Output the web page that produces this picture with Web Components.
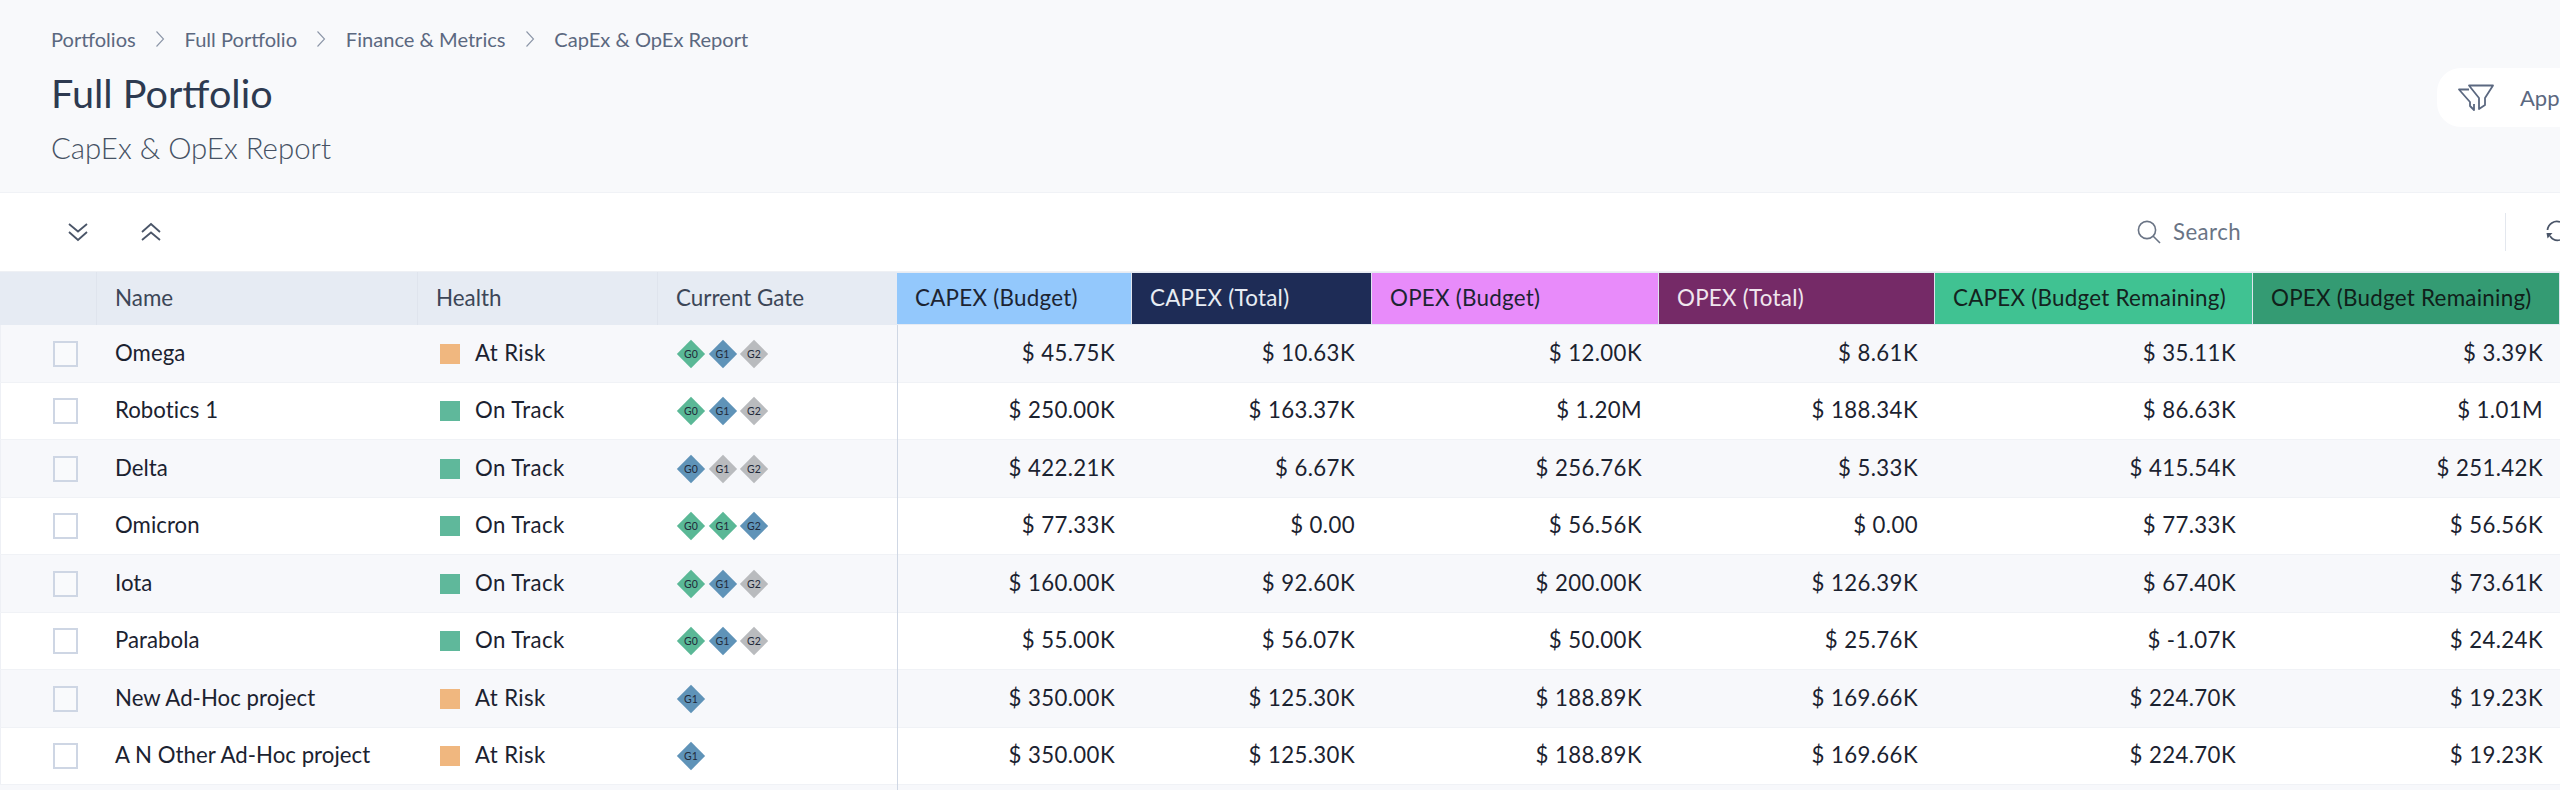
<!doctype html>
<html>
<head>
<meta charset="utf-8">
<style>
  html, body { margin: 0; padding: 0; background: #fff; }
  body { width: 2560px; height: 790px; overflow: hidden; font-family: "Lato", "Liberation Sans", sans-serif; }
</style>
</head>
<body>
<report-page></report-page>
<script>
/* ---------- data ---------- */
const COLUMNS = [
  { label: "CAPEX (Budget)", bg: "#93c8fc", fg: "#1c2433" },
  { label: "CAPEX (Total)", bg: "#1e2c56", fg: "#e8ecf3" },
  { label: "OPEX (Budget)", bg: "#e88bfa", fg: "#1c2433" },
  { label: "OPEX (Total)", bg: "#752a67", fg: "#f0e6ee" },
  { label: "CAPEX (Budget Remaining)", bg: "#40c292", fg: "#14231f" },
  { label: "OPEX (Budget Remaining)", bg: "#349b73", fg: "#10201a" },
];

const ROWS = [
  ["Omega", "At Risk", "gbs", ["45.75K", "10.63K", "12.00K", "8.61K", "35.11K", "3.39K"]],
  ["Robotics 1", "On Track", "gbs", ["250.00K", "163.37K", "1.20M", "188.34K", "86.63K", "1.01M"]],
  ["Delta", "On Track", "bss", ["422.21K", "6.67K", "256.76K", "5.33K", "415.54K", "251.42K"]],
  ["Omicron", "On Track", "ggb", ["77.33K", "0.00", "56.56K", "0.00", "77.33K", "56.56K"]],
  ["Iota", "On Track", "gbs", ["160.00K", "92.60K", "200.00K", "126.39K", "67.40K", "73.61K"]],
  ["Parabola", "On Track", "gbs", ["55.00K", "56.07K", "50.00K", "25.76K", "-1.07K", "24.24K"]],
  ["New Ad-Hoc project", "At Risk", "B", ["350.00K", "125.30K", "188.89K", "169.66K", "224.70K", "19.23K"]],
  ["A N Other Ad-Hoc project", "At Risk", "B", ["350.00K", "125.30K", "188.89K", "169.66K", "224.70K", "19.23K"]],
];

const GRID = "96px 321px 240px 240px 235px 240px 287px 276px 318px 307px";

/* ---------- <bread-crumbs> ---------- */
class BreadCrumbs extends HTMLElement {
  connectedCallback() {
    this.attachShadow({ mode: "open" });
    const items = this.getAttribute("items").split("|");
    const chev = `<svg width="10" height="18" viewBox="0 0 10 18" fill="none" stroke="#8b95a7" stroke-width="1.1"><path d="M1.5 1.5 L8.5 9 L1.5 16.5"/></svg>`;
    this.shadowRoot.innerHTML = `
      <style>
        :host { display: flex; align-items: center; gap: 19.4px; height: 24px; font-size: 20.1px; color: #5b6880; white-space: nowrap; }
        svg { display: block; }
      </style>
      ${items.map((t) => `<span>${t}</span>`).join(chev)}
    `;
  }
}
customElements.define("bread-crumbs", BreadCrumbs);

/* ---------- <page-header> ---------- */
class PageHeader extends HTMLElement {
  connectedCallback() {
    this.attachShadow({ mode: "open" });
    this.shadowRoot.innerHTML = `
      <style>
        :host { display: block; height: 192px; background: #f8f9fb; border-bottom: 1px solid #f0f2f6; overflow: hidden; }
        .inner { display: flex; justify-content: space-between; box-sizing: border-box; padding: 27px 0 0 51px; }
        h1 { margin: 20px 0 0; font-size: 39.6px; line-height: 44px; font-weight: 400; color: #2d3a50; }
        h2 { margin: 15px 0 0; font-size: 29.4px; line-height: 36px; font-weight: 300; color: #465264; }
        .btn {
          display: flex; align-items: center; gap: 26px; align-self: flex-start;
          margin-top: 41px; width: 123px; height: 59px; box-sizing: border-box; padding-left: 21px;
          background: #fff; border-radius: 24px 0 0 24px; font-size: 22px; color: #5b6880; white-space: nowrap;
        }
        svg { display: block; flex: none; }
      </style>
      <div class="inner">
        <div>
          <bread-crumbs items="Portfolios|Full Portfolio|Finance &amp; Metrics|CapEx &amp; OpEx Report"></bread-crumbs>
          <h1>${this.getAttribute("heading")}</h1>
          <h2>${this.getAttribute("sub")}</h2>
        </div>
        <div class="btn">
          <svg width="36" height="28" viewBox="0 0 36 28" fill="none" stroke="#5b6880" stroke-width="1.8" stroke-linejoin="round">
            <path d="M11 1.5 H35 L27 14 V21 L21 25 V14 Z"/>
            <path d="M11 5.5 H1 L12 18 V22 L16 26 V20"/>
          </svg>
          <span>App</span>
        </div>
      </div>
    `;
  }
}
customElements.define("page-header", PageHeader);

/* ---------- <tool-bar> ---------- */
class ToolBar extends HTMLElement {
  connectedCallback() {
    this.attachShadow({ mode: "open" });
    this.shadowRoot.innerHTML = `
      <style>
        :host { display: block; height: 78px; background: #fff; overflow: hidden; }
        .inner { display: flex; align-items: center; height: 78px; padding-left: 68px; box-sizing: border-box; }
        svg { display: block; flex: none; }
        .up { margin-left: 53px; }
        .search { display: flex; align-items: center; gap: 12px; margin-left: 1976px; font-size: 22.2px; letter-spacing: .45px; color: #6a7485; width: 368px; }
        .search span { padding-bottom: 2px; }
        .sep { width: 1px; height: 38px; background: #e3e7ee; flex: none; }
        .refresh { margin-left: 40px; margin-top: -2px; }
      </style>
      <div class="inner">
        <svg width="20" height="20" viewBox="0 0 20 20" fill="none" stroke="#4a5568" stroke-width="1.8"><path d="M1 2 L10 9.5 L19 2 M1 10 L10 18 L19 10"/></svg>
        <svg class="up" width="20" height="20" viewBox="0 0 20 20" fill="none" stroke="#4a5568" stroke-width="1.8"><path d="M1 10 L10 2 L19 10 M1 18 L10 10.5 L19 18"/></svg>
        <div class="search">
          <svg width="24" height="24" viewBox="0 0 24 24" fill="none" stroke="#6a7485" stroke-width="1.6"><circle cx="10" cy="10" r="8.6"/><path d="M16 16 L23 23"/></svg>
          <span>Search</span>
        </div>
        <div class="sep"></div>
        <svg class="refresh" width="14" height="22" viewBox="0 0 14 22" fill="none" stroke="#4a5568" stroke-width="1.7"><path d="M1.5 10 A9.5 9.5 0 0 1 14 2 M4 16 A9.5 9.5 0 0 0 14 20"/><path d="M0.5 13 L6.5 13 L1.5 18.5 Z" fill="#4a5568" stroke="none"/></svg>
      </div>
    `;
  }
}
customElements.define("tool-bar", ToolBar);

/* ---------- <gate-diamond> ---------- */
const GATE_COLORS = { g: "#5ab896", b: "#5f93b8", s: "#b9bbbe" };
class GateDiamond extends HTMLElement {
  connectedCallback() {
    this.attachShadow({ mode: "open" });
    const c = GATE_COLORS[this.getAttribute("tone")];
    this.shadowRoot.innerHTML = `
      <style>
        :host { display: block; position: relative; width: 28px; height: 28px; font-size: 10.5px; color: #1f2a3a; }
        .d { width: 20px; height: 20px; margin: 4px; background: ${c}; transform: rotate(45deg); }
        span { position: absolute; inset: 0; display: flex; align-items: center; justify-content: center; }
      </style>
      <div class="d"></div><span><slot></slot></span>
    `;
  }
}
customElements.define("gate-diamond", GateDiamond);

/* ---------- <project-row> ---------- */
class ProjectRow extends HTMLElement {
  connectedCallback() {
    this.attachShadow({ mode: "open" });
    const d = this.data;
    const odd = this.hasAttribute("striped");
    const chip = d[1] === "At Risk" ? "#f0b77f" : "#5fb89b";
    const gates = d[2] === "B"
      ? `<gate-diamond tone="b">G1</gate-diamond>`
      : [...d[2]].map((t, i) => `<gate-diamond tone="${t}">G${i}</gate-diamond>`).join("");
    this.shadowRoot.innerHTML = `
      <style>
        :host { display: grid; grid-template-columns: ${GRID}; height: 57.5px; align-items: center;
                background: ${odd ? "#f7f8fb" : "#fff"}; font-size: 22.2px; color: #1b2230;
                box-shadow: inset 0 -1px 0 #f0f2f6, inset 1px 0 0 #eef0f5; }
        .box { width: 25px; height: 26px; margin-left: 53px; box-sizing: border-box; border: 2px solid #ced6e4; background: ${odd ? "#f9fafc" : "#fff"}; }
        .name { padding: 0 0 3px 19px; white-space: nowrap; letter-spacing: .05px; }
        .health { display: flex; align-items: center; padding-left: 23px; gap: 15px; }
        .health span { padding-bottom: 3px; letter-spacing: .4px; }
        .chip { width: 20px; height: 20px; background: ${chip}; }
        .gates { display: flex; gap: 3.5px; padding-left: 20px; }
        .val { height: 100%; display: flex; align-items: center; justify-content: flex-end; padding: 0 17px 3px 0; box-sizing: border-box; white-space: nowrap; letter-spacing: .4px; }
        .val.first { border-left: 1px solid #cfd7e4; }
      </style>
      <div class="box"></div>
      <div class="name">${d[0]}</div>
      <div class="health"><div class="chip"></div><span>${d[1]}</span></div>
      <div class="gates">${gates}</div>
      ${d[3].map((v, i) => `<div class="val ${i === 0 ? "first" : ""}">$ ${v}</div>`).join("")}
    `;
  }
}
customElements.define("project-row", ProjectRow);

/* ---------- <report-table> ---------- */
class ReportTable extends HTMLElement {
  connectedCallback() {
    this.attachShadow({ mode: "open" });
    this.shadowRoot.innerHTML = `
      <style>
        :host { display: block; }
        .head { display: grid; grid-template-columns: ${GRID}; height: 54px; background: #e6ebf3; font-size: 22.4px; color: #3c4657; border-top: 1px solid #eef0f4; box-sizing: border-box; }
        .head > div { display: flex; align-items: center; box-sizing: border-box; white-space: nowrap; padding-bottom: 3px; }
        .plain { border-left: 1px solid #dfe4ed; padding-left: 18px; }
        .col { padding-left: 18px; border-right: 1px solid #dfe4ed; margin-top: 1px; margin-bottom: 1px; letter-spacing: .25px; }
        .tail { height: 8px; background: #f7f8fb; display: grid; grid-template-columns: 897px 1px; }
        .tail i { background: #cfd7e4; grid-column: 2; }
      </style>
      <div class="head">
        <div></div>
        <div class="plain">Name</div>
        <div class="plain">Health</div>
        <div class="plain">Current Gate</div>
        ${COLUMNS.map((c) => `<div class="col" style="background:${c.bg};color:${c.fg}">${c.label}</div>`).join("")}
      </div>
      <div id="rows"></div>
      <div class="tail"><i></i></div>
    `;
    const host = this.shadowRoot.getElementById("rows");
    ROWS.forEach((r, i) => {
      const el = document.createElement("project-row");
      el.data = r;
      if (i % 2 === 0) el.setAttribute("striped", "");
      host.appendChild(el);
    });
  }
}
customElements.define("report-table", ReportTable);

/* ---------- <report-page> ---------- */
class ReportPage extends HTMLElement {
  connectedCallback() {
    this.attachShadow({ mode: "open" });
    this.shadowRoot.innerHTML = `
      <style>:host { display: block; width: 2560px; height: 790px; overflow: hidden; }</style>
      <page-header heading="Full Portfolio" sub="CapEx &amp; OpEx Report"></page-header>
      <tool-bar></tool-bar>
      <report-table></report-table>
    `;
  }
}
customElements.define("report-page", ReportPage);
</script>
</body>
</html>
